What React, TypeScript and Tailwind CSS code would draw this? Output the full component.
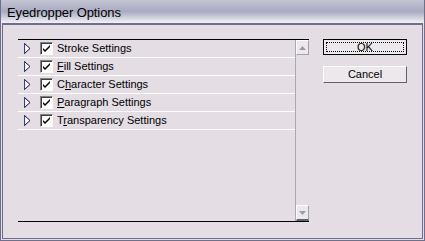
import React from 'react'

const rows: { pre: string; u: string; post: string }[] = [
  { pre: 'Stroke Settings', u: '', post: '' },
  { pre: '', u: 'F', post: 'ill Settings' },
  { pre: 'C', u: 'h', post: 'aracter Settings' },
  { pre: '', u: 'P', post: 'aragraph Settings' },
  { pre: 'T', u: 'r', post: 'ansparency Settings' }
]

const Triangle = () => (
  <svg width="7" height="11" viewBox="0 0 7 11" className="shrink-0">
    <polygon points="0.5,0.5 6,5.5 0.5,10.5" fill="#ffffff" stroke="#10102a" strokeWidth="1" />
    <line x1="0.5" y1="0.5" x2="0.5" y2="10.5" stroke="#3a3c8c" strokeWidth="1.2" />
  </svg>
)

const Checkbox = () => (
  <div className="w-[13px] h-[13px] shrink-0 bg-white border-t border-l border-t-[#808080] border-l-[#808080] border-b border-r border-b-white border-r-white shadow-[inset_1px_1px_0_#404040]">
    <svg width="11" height="11" viewBox="0 0 11 11">
      <path d="M2 5 L4 7 L9 2 L9 4 L4 9 L2 7 Z" fill="#000" />
    </svg>
  </div>
)

export default function App() {
  return (
    <div
      className="w-[425px] h-[241px] bg-[#e4dde4] flex flex-col border-x border-b border-[#6e6f8e]"
      style={{ fontFamily: '"Liberation Sans", Arial, sans-serif' }}
    >
      <div className="h-[23px] shrink-0 bg-gradient-to-b from-[#c4c5d4] via-[#a9aac0] to-[#f4f2f6] flex items-center pl-[6px] pt-[2px]">
        <span className="text-[13px] text-black leading-none tracking-[-0.1px]">Eyedropper Options</span>
      </div>
      <div className="flex-1 border-t-[2px] border-t-[#6e6f8e] mx-px mb-px border-x border-b border-[#6e6f8e] flex pt-[14px] pl-[15px] pr-[13px] pb-[16px] gap-[14px]">
        <div className="w-[291px] h-[183px] border-t border-b border-black flex">
          <div className="flex-1 flex flex-col">
            {rows.map((r, i) => (
              <div key={i} className="h-[18px] border-b border-white flex items-center shrink-0">
                <div className="w-[6px]" />
                <Triangle />
                <div className="w-[9px]" />
                <Checkbox />
                <span className="ml-[4px] text-[11px] text-black leading-none">
                  {r.pre}
                  {r.u && <span className="underline underline-offset-1">{r.u}</span>}
                  {r.post}
                </span>
              </div>
            ))}
          </div>
          <div className="w-[14px] border-l border-[#a8a8b8] flex flex-col justify-between">
            <div className="h-[15px] bg-[#ece8ec] border-t border-l border-white border-b border-r border-b-[#a0a0b0] border-r-[#a0a0b0] flex items-center justify-center">
              <svg width="7" height="4" viewBox="0 0 7 4">
                <polygon points="0,4 3.5,0 7,4" fill="#9a9aae" />
              </svg>
            </div>
            <div className="h-[16px] bg-[#ece8ec] border-t border-l border-white border-b-2 border-r border-b-[#606070] border-r-[#a0a0b0] flex items-center justify-center">
              <svg width="7" height="4" viewBox="0 0 7 4">
                <polygon points="0,0 7,0 3.5,4" fill="#9a9aae" />
              </svg>
            </div>
          </div>
        </div>
        <div className="w-[84px] flex flex-col gap-[11px]">
          <div className="h-[16px] border border-black bg-[#ece8ec] p-[2px]">
            <div className="h-full border border-dotted border-black flex items-center justify-center text-[11px] leading-none text-black">
              OK
            </div>
          </div>
          <div className="h-[17px] bg-[#ece8ec] border-t border-l border-white border-b border-r border-b-[#606070] border-r-[#606070] flex items-center justify-center text-[11px] leading-none text-black">
            Cancel
          </div>
        </div>
      </div>
    </div>
  )
}
